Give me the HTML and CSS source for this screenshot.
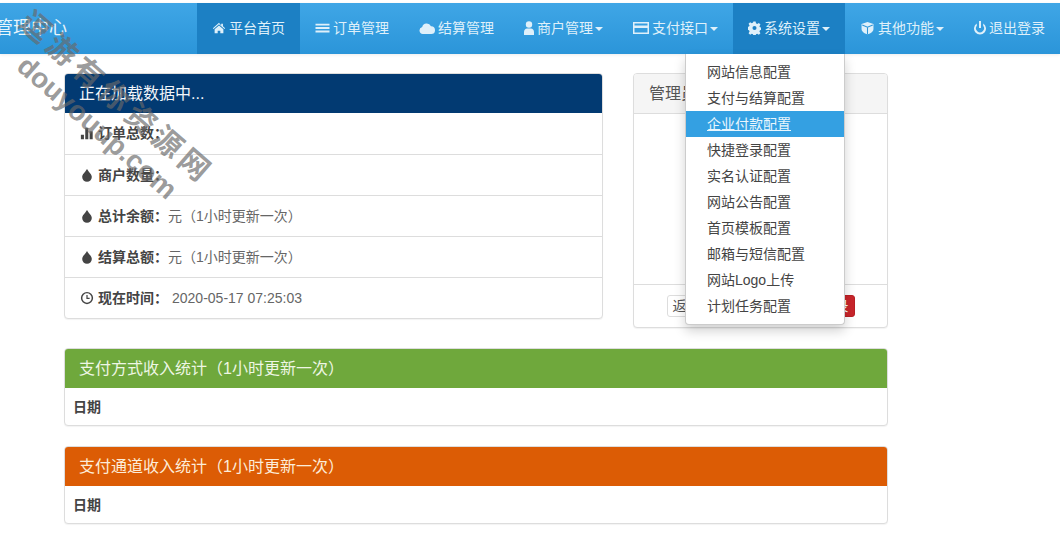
FILE: index.html
```html
<!DOCTYPE html>
<html lang="zh-CN">
<head>
    <meta charset="UTF-8">
    <title>管理中心</title>
    <link rel="stylesheet" href="styles.css">
</head>
<body>
    <nav class="navbar">
        <a class="brand">管理中心</a>
        <ul class="nav">
            <li class="active"><a><svg class="ico" viewBox="0 0 16 16"><path d="M8 2 1 8.200l.8.9L8 3.800l6.200 5.300.8-.9-2.500-2.200V3h-2v2.200z"/><path d="M3 9.300 8 5l5 4.300V14H9.500v-3h-3v3H3z"/></svg>平台首页</a></li>
            <li><a><svg class="ico i-15" viewBox="0 0 16 16"><path d="M0 3h16v2.200H0zM0 6.900h16v2.200H0zM0 10.800h16V13H0z"/></svg>订单管理</a></li>
            <li><a><svg class="ico i-16" viewBox="0 1 16 13"><path d="M3.800 13.500a3.500 3.500 0 0 1-.6-6.900A4.700 4.700 0 0 1 12 5.700a3.900 3.900 0 0 1 .2 7.800z"/></svg>结算管理</a></li>
            <li><a><svg class="ico i-10" viewBox="0 0 10 14"><circle cx="5" cy="3.500" r="3.200"/><path d="M0 14v-3c0-2 1.500-3.500 3-3.500h4c1.500 0 3 1.500 3 3.500v3z"/></svg>商户管理<i class="caret"></i></a></li>
            <li><a><svg class="ico i-16" viewBox="0 1 16 14"><path fill-rule="evenodd" d="M0 2h16v12H0zM1.500 3.500v2h13v-2zm0 4.500v4.500h13V8z"/></svg>支付接口<i class="caret"></i></a></li>
            <li class="active"><a><svg class="ico i-13" viewBox="1 1 14 14"><path fill-rule="evenodd" d="M6.800 1h2.400l.4 2 1.300.6 1.800-1.100 1.700 1.700-1.100 1.800.6 1.300 2 .4v2.400l-2 .4-.6 1.300 1.100 1.800-1.700 1.700-1.800-1.100-1.300.6-.4 2H6.800l-.4-2-1.300-.6-1.800 1.100-1.700-1.700 1.100-1.800-.6-1.300-2-.4V6.900l2-.4.600-1.300-1.100-1.800 1.700-1.700 1.800 1.100 1.300-.6zM8 5.800a2.200 2.200 0 1 0 0 4.400 2.200 2.200 0 0 0 0-4.400z"/></svg>系统设置<i class="caret"></i></a></li>
            <li><a><svg class="ico i-15" viewBox="0 0 16 16"><path d="M8 1 14.800 3.500V9c0 2.800-3 5-6.800 6.200C4.200 14 1.200 11.800 1.200 9V3.500z"/><path class="cut" d="M2 4.500 8 7l6-2.500M8 7v8"/></svg>其他功能<i class="caret"></i></a></li>
            <li><a><svg class="ico i-12" viewBox="0 0 12 14"><path d="M5 0h2v7H5z"/><path d="M2.800 2.500v2.300a4 4 0 1 0 6.400 0V2.500a6 6 0 1 1-6.400 0z"/></svg>退出登录</a></li>
        </ul>
    </nav>

    <ul class="dropdown">
        <li>网站信息配置</li>
        <li>支付与结算配置</li>
        <li class="hover">企业付款配置</li>
        <li>快捷登录配置</li>
        <li>实名认证配置</li>
        <li>网站公告配置</li>
        <li>首页模板配置</li>
        <li>邮箱与短信配置</li>
        <li>网站Logo上传</li>
        <li>计划任务配置</li>
    </ul>

    <main class="container">
        <div class="top-row">
            <section class="panel stats">
                <div class="panel-heading bg-navy">正在加载数据中...</div>
                <div class="row"><svg class="ico" viewBox="0 0 16 16"><path d="M1 10h3.500v5H1zM6 2h3.500v13H6zM11 6h3.500v9H11z"/></svg><b>订单总数：</b></div>
                <div class="row"><svg class="ico" viewBox="0 0 16 16"><path d="M8 1c2 3.500 5.500 6 5.500 9.300a5.500 5.500 0 0 1-11 0C2.500 7 6 4.500 8 1z"/></svg><b>商户数量：</b></div>
                <div class="row"><svg class="ico" viewBox="0 0 16 16"><path d="M8 1c2 3.500 5.500 6 5.500 9.300a5.500 5.500 0 0 1-11 0C2.500 7 6 4.500 8 1z"/></svg><b>总计余额：</b>元（1小时更新一次）</div>
                <div class="row"><svg class="ico" viewBox="0 0 16 16"><path d="M8 1c2 3.500 5.500 6 5.500 9.300a5.500 5.500 0 0 1-11 0C2.500 7 6 4.500 8 1z"/></svg><b>结算总额：</b>元（1小时更新一次）</div>
                <div class="row"><svg class="ico" viewBox="0 0 16 16"><path fill-rule="evenodd" d="M8 1a7 7 0 1 1 0 14A7 7 0 0 1 8 1zm0 1.700a5.300 5.300 0 1 0 0 10.600A5.300 5.300 0 0 0 8 2.700zM7.300 4.500h1.400v3.300H11v1.400H7.300z"/></svg><b>现在时间：</b><span class="time">2020-05-17 07:25:03</span></div>
            </section>
            <section class="panel admin">
                <div class="panel-heading bg-grey">管理员信息</div>
                <div class="admin-body"></div>
                <div class="admin-foot">
                    <a class="btn btn-default">返回首页</a>
                    <a class="btn btn-danger">退出登录</a>
                </div>
            </section>
        </div>
        <section class="panel wide">
            <div class="panel-heading bg-green">支付方式收入统计（1小时更新一次）</div>
            <div class="date">日期</div>
        </section>
        <section class="panel wide">
            <div class="panel-heading bg-orange">支付通道收入统计（1小时更新一次）</div>
            <div class="date">日期</div>
        </section>
    </main>

    <div class="watermark">
        <div class="wm-cn">逗游有你资源网</div>
        <div class="wm-en">douyouup.com</div>
    </div>
</body>
</html>
```
FILE: styles.css
```css
*{
    box-sizing: border-box;
}
body{
    margin: 0;
    padding-top: 3px;
    height: 553px;
    overflow: hidden;
    background: #fff;
    color: #333;
    font-family: "Liberation Sans", "Noto Sans CJK SC", sans-serif;
    font-size: 14px;
}
ul{
    list-style: none;
    margin: 0;
    padding: 0;
}
.ico{
    width: 14px;
    height: 14px;
    margin-right: 3px;
    fill: currentColor;
    vertical-align: -2px;
}
.i-10{
    width: 10px;
}
.i-12{
    width: 12px;
}
.i-13{
    width: 13px;
}
.i-15{
    width: 15px;
}
.i-16{
    width: 16px;
}
.cut{
    fill: none;
    stroke: #2b95d9;
    stroke-width: 1.200;
}
.navbar{
    display: flex;
    justify-content: space-between;
    height: 51px;
    background: linear-gradient(#3fa6e6, #2b95d9);
    box-shadow: 0 1px 3px rgba(0,0,0,.08);
}
.brand{
    margin-left: -5px;
    color: #e8f5fc;
    font-size: 18px;
    line-height: 50px;
}
.nav{
    display: flex;
}
.nav a{
    display: block;
    height: 51px;
    padding: 0 15px;
    color: #dff0fa;
    line-height: 50px;
    white-space: nowrap;
}
.nav .active a{
    background: #1c80c4;
}
.caret{
    display: inline-block;
    margin-left: 2px;
    border-top: 4px solid;
    border-left: 4px solid transparent;
    border-right: 4px solid transparent;
    vertical-align: 2px;
}
.dropdown{
    position: absolute;
    top: 54px;
    left: 685px;
    width: 160px;
    height: 271px;
    padding-top: 5px;
    background: #fff;
    border: 1px solid #ccc;
    border-top: 0;
    border-radius: 0 0 4px 4px;
    box-shadow: 0 6px 12px rgba(0,0,0,.18);
    z-index: 5;
}
.dropdown li{
    height: 26px;
    padding-left: 21px;
    color: #444;
    line-height: 26px;
}
.dropdown .hover{
    background: #34a0e2;
    color: #e9f6fd;
    text-decoration: underline;
}
.container{
    width: 824px;
    margin: 19px 0 0 64px;
}
.top-row{
    display: flex;
    justify-content: space-between;
}
.panel{
    margin-bottom: 20px;
    background: #fff;
    border: 1px solid #ddd;
    border-radius: 4px;
    box-shadow: 0 1px 1px rgba(0,0,0,.05);
    overflow: hidden;
}
.panel-heading{
    height: 39px;
    padding-left: 14px;
    font-size: 16px;
    line-height: 39px;
}
.bg-navy{
    background: #023a72;
    color: #f2f6fa;
}
.bg-grey{
    height: 40px;
    padding-left: 15px;
    background: #f5f5f5;
    border-bottom: 1px solid #ddd;
    color: #555;
}
.bg-green{
    background: #6fa83c;
    color: #eef6e4;
}
.bg-orange{
    background: #dc5c05;
    color: #fcecd9;
}
.stats{
    width: 539px;
    height: 246px;
}
.row{
    height: 41px;
    padding-left: 15px;
    border-top: 1px solid #ddd;
    color: #666;
    line-height: 40px;
}
.bg-navy + .row{
    border-top: 0;
}
.row .ico{
    margin-right: 4px;
    color: #444;
}
.row b{
    color: #444;
}
.time{
    margin-left: 4px;
}
.admin{
    display: flex;
    flex-direction: column;
    width: 255px;
    height: 255px;
    margin-bottom: 20px;
}
.admin-body{
    flex: 1;
}
.admin-foot{
    display: flex;
    justify-content: center;
    gap: 8px;
    height: 43px;
    padding-top: 10px;
    border-top: 1px solid #ddd;
}
.btn{
    width: 90px;
    height: 22px;
    padding: 0 5px;
    border: 1px solid #ddd;
    border-radius: 3px;
    font-size: 14px;
    line-height: 20px;
    white-space: nowrap;
}
.btn-default{
    color: #555;
}
.btn-danger{
    background: #c9252b;
    border-color: #b92025;
    color: #fff;
    text-align: right;
}
.wide{
    height: 78px;
}
.date{
    padding-left: 8px;
    color: #444;
    font-weight: bold;
    line-height: 38px;
}
/* site watermark stamped over the shot */
.watermark{
    position: absolute;
    top: 76px;
    left: -25px;
    width: 260px;
    color: rgba(105,105,105,.68);
    text-align: center;
    white-space: nowrap;
    transform: rotate(41deg);
    z-index: 9;
}
.wm-cn{
    height: 36px;
    font-size: 30px;
    font-weight: bold;
    letter-spacing: 5px;
    line-height: 36px;
}
.wm-en{
    height: 34px;
    padding-left: 10px;
    font-size: 28px;
    font-weight: bold;
    line-height: 34px;
}
```
